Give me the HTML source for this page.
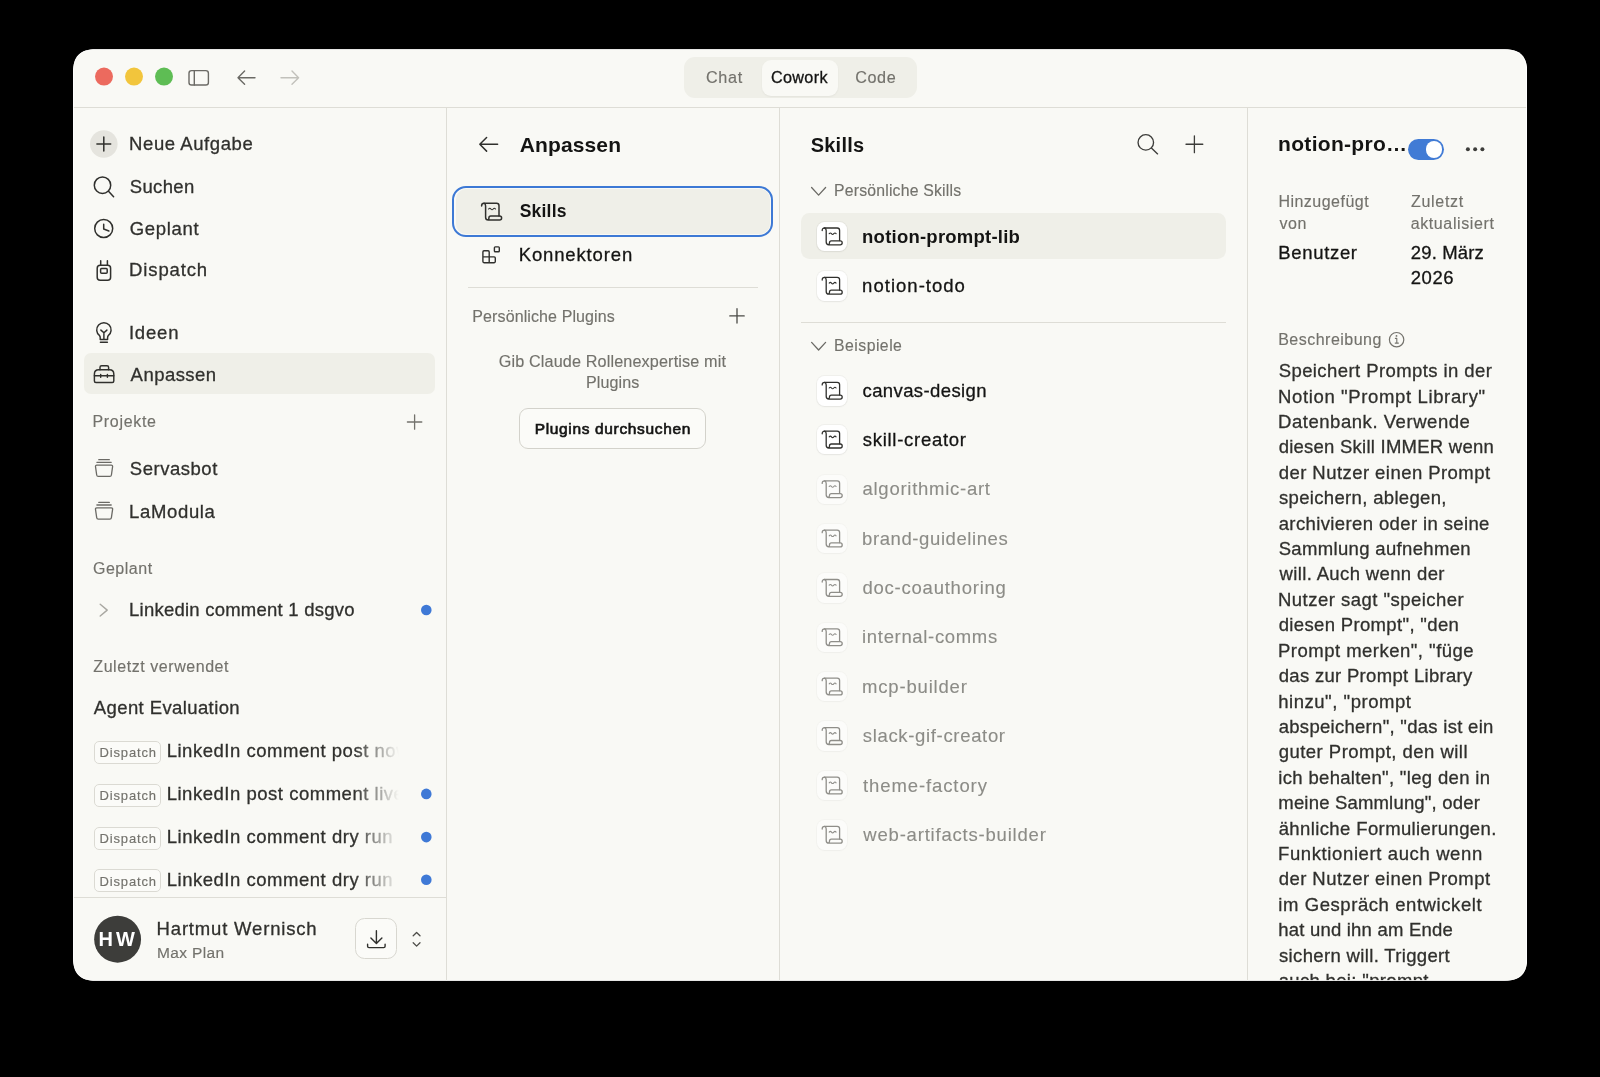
<!DOCTYPE html>
<html lang="de">
<head>
<meta charset="utf-8">
<title>Claude – Anpassen – Skills</title>
<style>
*{box-sizing:border-box;margin:0;padding:0}
html,body{width:1600px;height:1077px;background:#000;overflow:hidden}
body{font-family:"Liberation Sans",sans-serif;color:#3d3d3a;position:relative}
#win{position:absolute;left:73px;top:49.2px;width:1454.3px;height:931.5px;background:#f9f9f5;overflow:hidden;clip-path:path('M23,0 H1431.3 C1447.3,0 1454.3,7 1454.3,23 V908.5 C1454.3,924.5 1447.3,931.5 1431.3,931.5 H23 C7,931.5 0,924.5 0,908.5 V23 C0,7 7,0 23,0 Z')}
#pg{position:absolute;left:-73px;top:-49.2px;width:1600px;height:1077px;will-change:transform}
.abs{position:absolute}
.t{position:absolute;white-space:nowrap;line-height:1.2;-webkit-text-stroke:.3px}
.hl{position:absolute;height:1px;background:#deddd6}
.vl{position:absolute;width:1px;background:#deddd6}
.g{color:#73726c;-webkit-text-stroke:.15px}
.l{color:#8c8c87;-webkit-text-stroke:.12px}
.d{color:#30302d}
.k{color:#141413}
.b{font-weight:700;-webkit-text-stroke:0}
.m{-webkit-text-stroke:.65px}
svg.ic{position:absolute;left:0;top:0;width:1600px;height:1077px;overflow:visible;fill:none;stroke-linecap:round;stroke-linejoin:round}
.badge{position:absolute;left:93.8px;width:67.4px;height:23.2px;border:1px solid #dbdad3;border-radius:5px;background:#fbfbf8}
.row{position:absolute;left:166px;width:241.8px;height:30px;overflow:hidden;-webkit-mask-image:linear-gradient(to right,#000 187.8px,transparent 232.8px);mask-image:linear-gradient(to right,#000 187.8px,transparent 232.8px)}
.row .t{top:4px}
.ib{position:absolute;left:817px;width:29.6px;height:29.6px;border-radius:7.5px;background:#fff;box-shadow:0 0 0 1px rgba(31,30,29,.04),0 1px 2px rgba(0,0,0,.05)}
</style>
</head>
<body>
<div id="win"><div id="pg">

<!-- ===== title bar ===== -->
<div class="hl" style="left:73px;top:107px;width:1455px"></div>
<div class="abs" style="left:684px;top:57.3px;width:233px;height:40.7px;border-radius:11px;background:#efefe8"></div>
<div class="abs" style="left:762px;top:59.8px;width:75.5px;height:36px;border-radius:9px;background:#f9f9f5;box-shadow:0 1px 2px rgba(0,0,0,.05)"></div>

<!-- pane dividers -->
<div class="vl" style="left:446px;top:108px;height:873px"></div>
<div class="vl" style="left:779px;top:108px;height:873px"></div>
<div class="vl" style="left:1247px;top:108px;height:873px"></div>

<!-- ===== sidebar shapes ===== -->
<div class="abs" style="left:83.8px;top:353.4px;width:351.6px;height:40.6px;border-radius:7px;background:#efefe8"></div>
<div class="badge" style="top:740.9px"></div>
<div class="t g" style="left:99.4px;top:745px;font-size:13px;letter-spacing:0.876px">Dispatch</div>
<div class="row" style="top:736px"><div class="t d" style="left:0.7px;font-size:18.5px;letter-spacing:0.519px">LinkedIn comment post now</div></div>
<div class="badge" style="top:783.5px"></div>
<div class="t g" style="left:99.4px;top:788px;font-size:13px;letter-spacing:0.876px">Dispatch</div>
<div class="row" style="top:779px"><div class="t d" style="left:0.7px;font-size:18.5px;letter-spacing:0.519px">LinkedIn post comment live</div></div>
<div class="badge" style="top:826.7px"></div>
<div class="t g" style="left:99.4px;top:831px;font-size:13px;letter-spacing:0.876px">Dispatch</div>
<div class="row" style="top:822px"><div class="t d" style="left:0.7px;font-size:18.5px;letter-spacing:0.523px">LinkedIn comment dry run</div></div>
<div class="badge" style="top:869.3px"></div>
<div class="t g" style="left:99.4px;top:874px;font-size:13px;letter-spacing:0.876px">Dispatch</div>
<div class="row" style="top:865px"><div class="t d" style="left:0.7px;font-size:18.5px;letter-spacing:0.523px">LinkedIn comment dry run</div></div>
<div class="hl" style="left:73px;top:897px;width:373px"></div>
<svg class="ic" viewBox="0 0 1600 1077"><circle cx="117.6" cy="939.2" r="23.45" fill="#3d3d3a"/><circle cx="103.8" cy="144.05" r="13.8" fill="#e5e4de"/></svg>
<div class="abs" style="left:355.2px;top:918.2px;width:41.6px;height:41.2px;border-radius:9.5px;border:1px solid #d8d7d0;background:#fbfbf8"></div>

<!-- ===== middle shapes ===== -->
<div class="abs" style="left:452.3px;top:185.6px;width:321.1px;height:51.9px;border-radius:14px;border:2.6px solid #3d79d5;background:#f9f9f5"></div>
<div class="abs" style="left:456px;top:189.3px;width:313.7px;height:44.5px;border-radius:10px;background:#efefe8"></div>
<div class="hl" style="left:467.6px;top:287.4px;width:290.6px"></div>
<div class="abs" style="left:519.4px;top:408.3px;width:186.8px;height:41.1px;border-radius:9px;border:1px solid #d3d2cb;background:#fbfbf8"></div>

<!-- ===== skills shapes ===== -->
<div class="abs" style="left:800.5px;top:213.2px;width:425.1px;height:46.3px;border-radius:8.5px;background:#efefe8"></div>
<div class="hl" style="left:800.5px;top:322.2px;width:425.2px"></div>
<div class="ib" style="top:221.7px"></div>
<div class="ib" style="top:271.1px"></div>
<div class="ib" style="top:376.0px"></div>
<div class="ib" style="top:424.9px"></div>
<div class="ib" style="top:474.5px;opacity:.5"></div>
<div class="ib" style="top:523.8px;opacity:.5"></div>
<div class="ib" style="top:573.2px;opacity:.5"></div>
<div class="ib" style="top:622.5px;opacity:.5"></div>
<div class="ib" style="top:671.8px;opacity:.5"></div>
<div class="ib" style="top:721.4px;opacity:.5"></div>
<div class="ib" style="top:770.8px;opacity:.5"></div>
<div class="ib" style="top:820.1px;opacity:.5"></div>

<!-- ===== detail shapes ===== -->
<div class="abs" style="left:1407.6px;top:138.8px;width:36.6px;height:20.8px;border-radius:10.4px;background:#417bd5"></div>
<div class="abs" style="left:1425.6px;top:140.8px;width:16.8px;height:16.8px;border-radius:50%;background:#fff"></div>

<div class="t g" style="left:706.0px;top:68px;font-size:16.2px;letter-spacing:0.646px;">Chat</div>
<div class="t k" style="left:770.9px;top:68px;font-size:16.2px;letter-spacing:0.365px;">Cowork</div>
<div class="t g" style="left:855.2px;top:68px;font-size:16.2px;letter-spacing:0.613px;">Code</div>
<div class="t d" style="left:129.1px;top:133px;font-size:18.5px;letter-spacing:0.578px;">Neue Aufgabe</div>
<div class="t d" style="left:129.8px;top:176px;font-size:18.5px;letter-spacing:0.338px;">Suchen</div>
<div class="t d" style="left:129.7px;top:218px;font-size:18.5px;letter-spacing:0.695px;">Geplant</div>
<div class="t d" style="left:129.1px;top:259px;font-size:18.5px;letter-spacing:0.862px;">Dispatch</div>
<div class="t d" style="left:128.9px;top:322px;font-size:18.5px;letter-spacing:0.828px;">Ideen</div>
<div class="t d" style="left:130.6px;top:364px;font-size:18.5px;letter-spacing:0.463px;">Anpassen</div>
<div class="t g" style="left:92.5px;top:412px;font-size:16px;letter-spacing:0.674px;">Projekte</div>
<div class="t d" style="left:129.8px;top:458px;font-size:18.5px;letter-spacing:0.522px;">Servasbot</div>
<div class="t d" style="left:129.1px;top:501px;font-size:18.5px;letter-spacing:0.650px;">LaModula</div>
<div class="t g" style="left:93.0px;top:559px;font-size:16px;letter-spacing:0.513px;">Geplant</div>
<div class="t d" style="left:129.1px;top:599px;font-size:18.5px;letter-spacing:0.231px;">Linkedin comment 1 dsgvo</div>
<div class="t g" style="left:93.3px;top:657px;font-size:16px;letter-spacing:0.559px;">Zuletzt verwendet</div>
<div class="t d" style="left:93.8px;top:697px;font-size:18.5px;letter-spacing:0.396px;">Agent Evaluation</div>
<div class="t d" style="left:156.6px;top:918px;font-size:18.5px;letter-spacing:0.821px;">Hartmut Wernisch</div>
<div class="t g" style="left:157.0px;top:944px;font-size:15.5px;letter-spacing:0.350px;">Max Plan</div>
<div class="t k b" style="left:519.7px;top:132px;font-size:21px;letter-spacing:0.136px;">Anpassen</div>
<div class="t k b" style="left:519.7px;top:201px;font-size:17.5px;letter-spacing:0.218px;">Skills</div>
<div class="t k" style="left:518.7px;top:244px;font-size:18.5px;letter-spacing:0.860px;">Konnektoren</div>
<div class="t g" style="left:472.3px;top:307px;font-size:16px;letter-spacing:0.109px;">Persönliche Plugins</div>
<div class="t g" style="left:498.7px;top:352px;font-size:16.2px;letter-spacing:0.141px;">Gib Claude Rollenexpertise mit</div>
<div class="t g" style="left:585.9px;top:373px;font-size:16.1px;letter-spacing:0.101px;">Plugins</div>
<div class="t k m" style="left:534.7px;top:420px;font-size:15.5px;letter-spacing:0.654px;">Plugins durchsuchen</div>
<div class="t k b" style="left:810.7px;top:133px;font-size:20px;letter-spacing:0.226px;">Skills</div>
<div class="t g" style="left:834.0px;top:182px;font-size:15.8px;letter-spacing:0.192px;">Persönliche Skills</div>
<div class="t k b" style="left:862.1px;top:226px;font-size:18.5px;letter-spacing:0.228px;">notion-prompt-lib</div>
<div class="t k" style="left:862.1px;top:275px;font-size:18.5px;letter-spacing:1.023px;">notion-todo</div>
<div class="t g" style="left:834.0px;top:337px;font-size:15.8px;letter-spacing:0.474px;">Beispiele</div>
<div class="t k" style="left:862.5px;top:380px;font-size:18.5px;letter-spacing:0.399px;">canvas-design</div>
<div class="t k" style="left:862.8px;top:429px;font-size:18.5px;letter-spacing:0.712px;">skill-creator</div>
<div class="t l" style="left:862.5px;top:478px;font-size:18.5px;letter-spacing:0.737px;">algorithmic-art</div>
<div class="t l" style="left:862.1px;top:528px;font-size:18.5px;letter-spacing:0.591px;">brand-guidelines</div>
<div class="t l" style="left:862.5px;top:577px;font-size:18.5px;letter-spacing:0.764px;">doc-coauthoring</div>
<div class="t l" style="left:862.1px;top:626px;font-size:18.5px;letter-spacing:0.666px;">internal-comms</div>
<div class="t l" style="left:862.1px;top:676px;font-size:18.5px;letter-spacing:0.808px;">mcp-builder</div>
<div class="t l" style="left:862.8px;top:725px;font-size:18.5px;letter-spacing:0.664px;">slack-gif-creator</div>
<div class="t l" style="left:863.0px;top:775px;font-size:18.5px;letter-spacing:0.901px;">theme-factory</div>
<div class="t l" style="left:863.3px;top:824px;font-size:18.5px;letter-spacing:0.800px;">web-artifacts-builder</div>
<div class="t k b" style="left:1278.1px;top:131px;font-size:21px;letter-spacing:0.299px;">notion-pro…</div>
<div class="t g" style="left:1278.4px;top:192px;font-size:16px;letter-spacing:0.484px;">Hinzugefügt</div>
<div class="t g" style="left:1279.6px;top:214px;font-size:16px;letter-spacing:0.448px;">von</div>
<div class="t k" style="left:1278.2px;top:242px;font-size:18.5px;letter-spacing:0.683px;">Benutzer</div>
<div class="t g" style="left:1410.9px;top:192px;font-size:16px;letter-spacing:0.718px;">Zuletzt</div>
<div class="t g" style="left:1410.7px;top:214px;font-size:16px;letter-spacing:0.610px;">aktualisiert</div>
<div class="t k" style="left:1410.8px;top:242px;font-size:18.5px;letter-spacing:0.140px;">29. März</div>
<div class="t k" style="left:1410.8px;top:267px;font-size:18.5px;letter-spacing:0.529px;">2026</div>
<div class="t g" style="left:1278.2px;top:330px;font-size:16px;letter-spacing:0.482px;">Beschreibung</div>
<div class="t d" style="left:1278.7px;top:360px;font-size:18.5px;letter-spacing:0.415px;">Speichert Prompts in der</div>
<div class="t d" style="left:1278.0px;top:386px;font-size:18.5px;letter-spacing:0.638px;">Notion "Prompt Library"</div>
<div class="t d" style="left:1278.0px;top:411px;font-size:18.5px;letter-spacing:0.544px;">Datenbank. Verwende</div>
<div class="t d" style="left:1278.7px;top:436px;font-size:18.5px;letter-spacing:0.242px;">diesen Skill IMMER wenn</div>
<div class="t d" style="left:1278.7px;top:462px;font-size:18.5px;letter-spacing:0.448px;">der Nutzer einen Prompt</div>
<div class="t d" style="left:1279.0px;top:487px;font-size:18.5px;letter-spacing:0.333px;">speichern, ablegen,</div>
<div class="t d" style="left:1278.7px;top:513px;font-size:18.5px;letter-spacing:0.381px;">archivieren oder in seine</div>
<div class="t d" style="left:1278.7px;top:538px;font-size:18.5px;letter-spacing:0.341px;">Sammlung aufnehmen</div>
<div class="t d" style="left:1279.5px;top:563px;font-size:18.5px;letter-spacing:0.367px;">will. Auch wenn der</div>
<div class="t d" style="left:1278.0px;top:589px;font-size:18.5px;letter-spacing:0.470px;">Nutzer sagt "speicher</div>
<div class="t d" style="left:1278.7px;top:614px;font-size:18.5px;letter-spacing:0.347px;">diesen Prompt", "den</div>
<div class="t d" style="left:1278.0px;top:640px;font-size:18.5px;letter-spacing:0.487px;">Prompt merken", "füge</div>
<div class="t d" style="left:1278.7px;top:665px;font-size:18.5px;letter-spacing:0.309px;">das zur Prompt Library</div>
<div class="t d" style="left:1278.2px;top:691px;font-size:18.5px;letter-spacing:0.536px;">hinzu", "prompt</div>
<div class="t d" style="left:1278.7px;top:716px;font-size:18.5px;letter-spacing:0.287px;">abspeichern", "das ist ein</div>
<div class="t d" style="left:1278.7px;top:741px;font-size:18.5px;letter-spacing:0.471px;">guter Prompt, den will</div>
<div class="t d" style="left:1278.3px;top:767px;font-size:18.5px;letter-spacing:0.329px;">ich behalten", "leg den in</div>
<div class="t d" style="left:1278.3px;top:792px;font-size:18.5px;letter-spacing:0.185px;">meine Sammlung", oder</div>
<div class="t d" style="left:1278.7px;top:818px;font-size:18.5px;letter-spacing:0.387px;">ähnliche Formulierungen.</div>
<div class="t d" style="left:1278.0px;top:843px;font-size:18.5px;letter-spacing:0.616px;">Funktioniert auch wenn</div>
<div class="t d" style="left:1278.7px;top:868px;font-size:18.5px;letter-spacing:0.448px;">der Nutzer einen Prompt</div>
<div class="t d" style="left:1278.3px;top:894px;font-size:18.5px;letter-spacing:0.573px;">im Gespräch entwickelt</div>
<div class="t d" style="left:1278.2px;top:919px;font-size:18.5px;letter-spacing:0.214px;">hat und ihn am Ende</div>
<div class="t d" style="left:1279.0px;top:945px;font-size:18.5px;letter-spacing:0.347px;">sichern will. Triggert</div>
<div class="t d" style="left:1278.7px;top:970px;font-size:18.5px;letter-spacing:0.334px;">auch bei: "prompt</div>
<div class="t b" style="left:98.5px;top:927px;font-size:20px;color:#fff;letter-spacing:3.129px">HW</div>

<svg class="ic" viewBox="0 0 1600 1077">
<g stroke="none"><circle cx="104" cy="76.6" r="9" fill="#ec6a5e"/><circle cx="134" cy="76.6" r="9" fill="#f2c53c"/><circle cx="164" cy="76.6" r="9" fill="#5ebd54"/></g>
<g transform="translate(0,0)" stroke="#6b6a65" stroke-width="1.4" ><rect x="189" y="70.6" width="19.4" height="14.4" rx="2.6"/><path d="M194.3,70.6 V85"/></g>
<g transform="translate(0,0)" stroke="#6b6a65" stroke-width="1.4" ><path d="M255,77.7 H238 M244.6,71.1 L238,77.7 L244.6,84.3"/></g>
<g transform="translate(0,0)" stroke="#c2c1bb" stroke-width="1.4" ><path d="M281,77.7 H298.6 M292,71.1 L298.6,77.7 L292,84.3"/></g>
<g stroke="none" fill="#3f79d6"><circle cx="426.3" cy="610" r="5.3"/><circle cx="426.3" cy="793.9" r="5.3"/><circle cx="426.3" cy="837.1" r="5.3"/><circle cx="426.3" cy="879.7" r="5.3"/></g>
<g transform="translate(103.8,144)" stroke="#30302d" stroke-width="1.5" ><path d="M-6.9,0 H6.9 M0,-6.9 V6.9"/></g>
<g transform="translate(0,0)" stroke="#30302d" stroke-width="1.5" ><circle cx="102.5" cy="185.2" r="8.2"/><path d="M108.5,191.3 L113.6,196.8"/></g>
<g transform="translate(0,0)" stroke="#30302d" stroke-width="1.5" ><circle cx="103.7" cy="228.5" r="9"/><path d="M103.7,224.2 V229 L108.9,231"/></g>
<g transform="translate(0,0)" stroke="#30302d" stroke-width="1.5" ><rect x="97.2" y="265.2" width="13.4" height="15" rx="3"/><rect x="100.6" y="268.6" width="6.6" height="4.7" rx="1"/><path d="M100.7,260.8 V265 M107.4,260.8 V265"/></g>
<g transform="translate(0,0)" stroke="#30302d" stroke-width="1.45" ><path d="M100.2,339.4 V337.6 Q100.2,336.5 99.6,335.7 A7.2,7.2 0 1 1 108.2,335.7 Q107.6,336.5 107.6,337.6 V339.4 Z"/><path d="M100.9,330.1 L103.9,332.8 L106.9,330.1 M103.9,332.8 V339.2 M100.4,342.3 H107.4"/></g>
<g transform="translate(0,0)" stroke="#30302d" stroke-width="1.45" ><path d="M94.4,381 V374 Q94.4,369.7 98.7,369.7 H109.5 Q113.8,369.7 113.8,374 V381 Q113.8,382.5 112.3,382.5 H95.9 Q94.4,382.5 94.4,381 Z"/><path d="M100,369.7 V367.3 Q100,365.7 101.6,365.7 H107 Q108.6,365.7 108.6,367.3 V369.7 M94.4,375.8 H113.8 M100.7,374.4 V377.3 M107.4,374.4 V377.3"/></g>
<g transform="translate(414.6,422)" stroke="#73726c" stroke-width="1.3" ><path d="M-7.2,0 H7.2 M0,-7.2 V7.2"/></g>
<g transform="translate(94,459)" stroke="#6b6a65" stroke-width="1.3" ><path d="M4.8,0.7 H15.3 M2.9,3.3 H17.2 M2.8,6.2 H17.3 Q18.8,6.2 18.6,7.7 L17.4,16 Q17.2,17.4 15.8,17.4 H4.3 Q2.9,17.4 2.7,16 L1.5,7.7 Q1.3,6.2 2.8,6.2 Z"/></g>
<g transform="translate(94,501.7)" stroke="#6b6a65" stroke-width="1.3" ><path d="M4.8,0.7 H15.3 M2.9,3.3 H17.2 M2.8,6.2 H17.3 Q18.8,6.2 18.6,7.7 L17.4,16 Q17.2,17.4 15.8,17.4 H4.3 Q2.9,17.4 2.7,16 L1.5,7.7 Q1.3,6.2 2.8,6.2 Z"/></g>
<g transform="translate(0,0)" stroke="#a9a8a2" stroke-width="1.4" ><path d="M100.2,604.2 L107.2,610.1 L100.2,616"/></g>
<g transform="translate(0,0)" stroke="#30302d" stroke-width="1.4" ><path d="M376.4,930.7 V943.3 M370.9,938 L376.4,943.5 L381.9,938 M367.6,944.3 V946.2 Q367.6,947.6 369,947.6 H383.7 Q385.1,947.6 385.1,946.2 V944.3"/></g>
<g transform="translate(0,0)" stroke="#4d4c48" stroke-width="1.3" ><path d="M413.2,935.8 L416.6,932.5 L420,935.8 M413.2,942.8 L416.6,946.1 L420,942.8"/></g>
<g transform="translate(0,0)" stroke="#30302d" stroke-width="1.5" ><path d="M497.6,144.3 H479.8 M486.6,137.5 L479.8,144.3 L486.6,151.1"/></g>
<g transform="translate(481,202.7)" stroke="#30302d" stroke-width="1.5" ><path d="M0.6,3.2 Q0.6,0.6 3,0.6 H15.6 Q18,0.6 18,3 V13.2"/><path d="M3,0.6 Q4.6,1 4.6,3.2 V14.6 Q4.6,17.4 7.2,17.4 H18.6 Q20.6,17.4 20.6,15.4 Q20.6,13.4 18.6,13.4 H9.8 Q7.9,13.4 7.9,15.4 Q7.9,17.4 6.4,17.4"/><path d="M7.6,6.3 q1.2,-1.5 2.3,0 t2.3,0 t2.3,0" stroke-width="1.1"/></g>
<g transform="translate(0,0)" stroke="#30302d" stroke-width="1.4" ><path d="M484,250.8 H488.1 Q489.2,250.8 489.2,251.9 V256.9 H494.2 Q495.3,256.9 495.3,258 V261.6 Q495.3,262.7 494.2,262.7 H484 Q482.9,262.7 482.9,261.6 V251.9 Q482.9,250.8 484,250.8 Z M482.9,256.9 H489.2 V262.7"/><rect x="494.4" y="246.9" width="4.9" height="4.9" rx="0.9"/></g>
<g transform="translate(737,315.9)" stroke="#4a4a46" stroke-width="1.3" ><path d="M-7.2,0 H7.2 M0,-7.2 V7.2"/></g>
<g transform="translate(0,0)" stroke="#3d3d3a" stroke-width="1.35" ><circle cx="1145.8" cy="142.4" r="7.75"/><path d="M1151.4,148 L1157.6,153.9"/></g>
<g transform="translate(1194.4,144.25)" stroke="#3d3d3a" stroke-width="1.3" ><path d="M-8.4,0 H8.4 M0,-8.4 V8.4"/></g>
<g transform="translate(811.6,187.5)" stroke="#6b6a65" stroke-width="1.3" ><path d="M0,0 L7,7.6 L14,0"/></g>
<g transform="translate(811.6,342.4)" stroke="#6b6a65" stroke-width="1.3" ><path d="M0,0 L7,7.6 L14,0"/></g>
<g transform="translate(821.6,227.4)" stroke="#30302d" stroke-width="1.3" ><path d="M0.6,3.2 Q0.6,0.6 3,0.6 H15.6 Q18,0.6 18,3 V13.2"/><path d="M3,0.6 Q4.6,1 4.6,3.2 V14.6 Q4.6,17.4 7.2,17.4 H18.6 Q20.6,17.4 20.6,15.4 Q20.6,13.4 18.6,13.4 H9.8 Q7.9,13.4 7.9,15.4 Q7.9,17.4 6.4,17.4"/><path d="M7.6,6.3 q1.2,-1.5 2.3,0 t2.3,0 t2.3,0" stroke-width="1.1"/></g>
<g transform="translate(821.6,276.8)" stroke="#30302d" stroke-width="1.3" ><path d="M0.6,3.2 Q0.6,0.6 3,0.6 H15.6 Q18,0.6 18,3 V13.2"/><path d="M3,0.6 Q4.6,1 4.6,3.2 V14.6 Q4.6,17.4 7.2,17.4 H18.6 Q20.6,17.4 20.6,15.4 Q20.6,13.4 18.6,13.4 H9.8 Q7.9,13.4 7.9,15.4 Q7.9,17.4 6.4,17.4"/><path d="M7.6,6.3 q1.2,-1.5 2.3,0 t2.3,0 t2.3,0" stroke-width="1.1"/></g>
<g transform="translate(821.6,381.7)" stroke="#30302d" stroke-width="1.3" ><path d="M0.6,3.2 Q0.6,0.6 3,0.6 H15.6 Q18,0.6 18,3 V13.2"/><path d="M3,0.6 Q4.6,1 4.6,3.2 V14.6 Q4.6,17.4 7.2,17.4 H18.6 Q20.6,17.4 20.6,15.4 Q20.6,13.4 18.6,13.4 H9.8 Q7.9,13.4 7.9,15.4 Q7.9,17.4 6.4,17.4"/><path d="M7.6,6.3 q1.2,-1.5 2.3,0 t2.3,0 t2.3,0" stroke-width="1.1"/></g>
<g transform="translate(821.6,430.6)" stroke="#30302d" stroke-width="1.3" ><path d="M0.6,3.2 Q0.6,0.6 3,0.6 H15.6 Q18,0.6 18,3 V13.2"/><path d="M3,0.6 Q4.6,1 4.6,3.2 V14.6 Q4.6,17.4 7.2,17.4 H18.6 Q20.6,17.4 20.6,15.4 Q20.6,13.4 18.6,13.4 H9.8 Q7.9,13.4 7.9,15.4 Q7.9,17.4 6.4,17.4"/><path d="M7.6,6.3 q1.2,-1.5 2.3,0 t2.3,0 t2.3,0" stroke-width="1.1"/></g>
<g transform="translate(821.6,480.2)" stroke="#8f8e89" stroke-width="1.3" ><path d="M0.6,3.2 Q0.6,0.6 3,0.6 H15.6 Q18,0.6 18,3 V13.2"/><path d="M3,0.6 Q4.6,1 4.6,3.2 V14.6 Q4.6,17.4 7.2,17.4 H18.6 Q20.6,17.4 20.6,15.4 Q20.6,13.4 18.6,13.4 H9.8 Q7.9,13.4 7.9,15.4 Q7.9,17.4 6.4,17.4"/><path d="M7.6,6.3 q1.2,-1.5 2.3,0 t2.3,0 t2.3,0" stroke-width="1.1"/></g>
<g transform="translate(821.6,529.5)" stroke="#8f8e89" stroke-width="1.3" ><path d="M0.6,3.2 Q0.6,0.6 3,0.6 H15.6 Q18,0.6 18,3 V13.2"/><path d="M3,0.6 Q4.6,1 4.6,3.2 V14.6 Q4.6,17.4 7.2,17.4 H18.6 Q20.6,17.4 20.6,15.4 Q20.6,13.4 18.6,13.4 H9.8 Q7.9,13.4 7.9,15.4 Q7.9,17.4 6.4,17.4"/><path d="M7.6,6.3 q1.2,-1.5 2.3,0 t2.3,0 t2.3,0" stroke-width="1.1"/></g>
<g transform="translate(821.6,578.9)" stroke="#8f8e89" stroke-width="1.3" ><path d="M0.6,3.2 Q0.6,0.6 3,0.6 H15.6 Q18,0.6 18,3 V13.2"/><path d="M3,0.6 Q4.6,1 4.6,3.2 V14.6 Q4.6,17.4 7.2,17.4 H18.6 Q20.6,17.4 20.6,15.4 Q20.6,13.4 18.6,13.4 H9.8 Q7.9,13.4 7.9,15.4 Q7.9,17.4 6.4,17.4"/><path d="M7.6,6.3 q1.2,-1.5 2.3,0 t2.3,0 t2.3,0" stroke-width="1.1"/></g>
<g transform="translate(821.6,628.2)" stroke="#8f8e89" stroke-width="1.3" ><path d="M0.6,3.2 Q0.6,0.6 3,0.6 H15.6 Q18,0.6 18,3 V13.2"/><path d="M3,0.6 Q4.6,1 4.6,3.2 V14.6 Q4.6,17.4 7.2,17.4 H18.6 Q20.6,17.4 20.6,15.4 Q20.6,13.4 18.6,13.4 H9.8 Q7.9,13.4 7.9,15.4 Q7.9,17.4 6.4,17.4"/><path d="M7.6,6.3 q1.2,-1.5 2.3,0 t2.3,0 t2.3,0" stroke-width="1.1"/></g>
<g transform="translate(821.6,677.5)" stroke="#8f8e89" stroke-width="1.3" ><path d="M0.6,3.2 Q0.6,0.6 3,0.6 H15.6 Q18,0.6 18,3 V13.2"/><path d="M3,0.6 Q4.6,1 4.6,3.2 V14.6 Q4.6,17.4 7.2,17.4 H18.6 Q20.6,17.4 20.6,15.4 Q20.6,13.4 18.6,13.4 H9.8 Q7.9,13.4 7.9,15.4 Q7.9,17.4 6.4,17.4"/><path d="M7.6,6.3 q1.2,-1.5 2.3,0 t2.3,0 t2.3,0" stroke-width="1.1"/></g>
<g transform="translate(821.6,727.1)" stroke="#8f8e89" stroke-width="1.3" ><path d="M0.6,3.2 Q0.6,0.6 3,0.6 H15.6 Q18,0.6 18,3 V13.2"/><path d="M3,0.6 Q4.6,1 4.6,3.2 V14.6 Q4.6,17.4 7.2,17.4 H18.6 Q20.6,17.4 20.6,15.4 Q20.6,13.4 18.6,13.4 H9.8 Q7.9,13.4 7.9,15.4 Q7.9,17.4 6.4,17.4"/><path d="M7.6,6.3 q1.2,-1.5 2.3,0 t2.3,0 t2.3,0" stroke-width="1.1"/></g>
<g transform="translate(821.6,776.5)" stroke="#8f8e89" stroke-width="1.3" ><path d="M0.6,3.2 Q0.6,0.6 3,0.6 H15.6 Q18,0.6 18,3 V13.2"/><path d="M3,0.6 Q4.6,1 4.6,3.2 V14.6 Q4.6,17.4 7.2,17.4 H18.6 Q20.6,17.4 20.6,15.4 Q20.6,13.4 18.6,13.4 H9.8 Q7.9,13.4 7.9,15.4 Q7.9,17.4 6.4,17.4"/><path d="M7.6,6.3 q1.2,-1.5 2.3,0 t2.3,0 t2.3,0" stroke-width="1.1"/></g>
<g transform="translate(821.6,825.8)" stroke="#8f8e89" stroke-width="1.3" ><path d="M0.6,3.2 Q0.6,0.6 3,0.6 H15.6 Q18,0.6 18,3 V13.2"/><path d="M3,0.6 Q4.6,1 4.6,3.2 V14.6 Q4.6,17.4 7.2,17.4 H18.6 Q20.6,17.4 20.6,15.4 Q20.6,13.4 18.6,13.4 H9.8 Q7.9,13.4 7.9,15.4 Q7.9,17.4 6.4,17.4"/><path d="M7.6,6.3 q1.2,-1.5 2.3,0 t2.3,0 t2.3,0" stroke-width="1.1"/></g>
<g fill="#3d3d3a" stroke="none"><circle cx="1467.9" cy="149.3" r="2"/><circle cx="1475.15" cy="149.3" r="2"/><circle cx="1482.4" cy="149.3" r="2"/></g>
<g transform="translate(0,0)" stroke="#73726c" stroke-width="1.2" ><circle cx="1396.6" cy="339.7" r="7.2"/><path d="M1395.4,338.4 H1396.8 V343 M1395.2,343.1 H1398.4" stroke-width="1.1"/><circle cx="1396.5" cy="335.9" r="0.9" fill="#73726c" stroke="none"/></g>
</svg>

</div><div style="position:absolute;left:0;top:0;right:0;bottom:0;border:1px solid rgba(255,255,255,.85);border-radius:19px;pointer-events:none"></div></div>
</body>
</html>
